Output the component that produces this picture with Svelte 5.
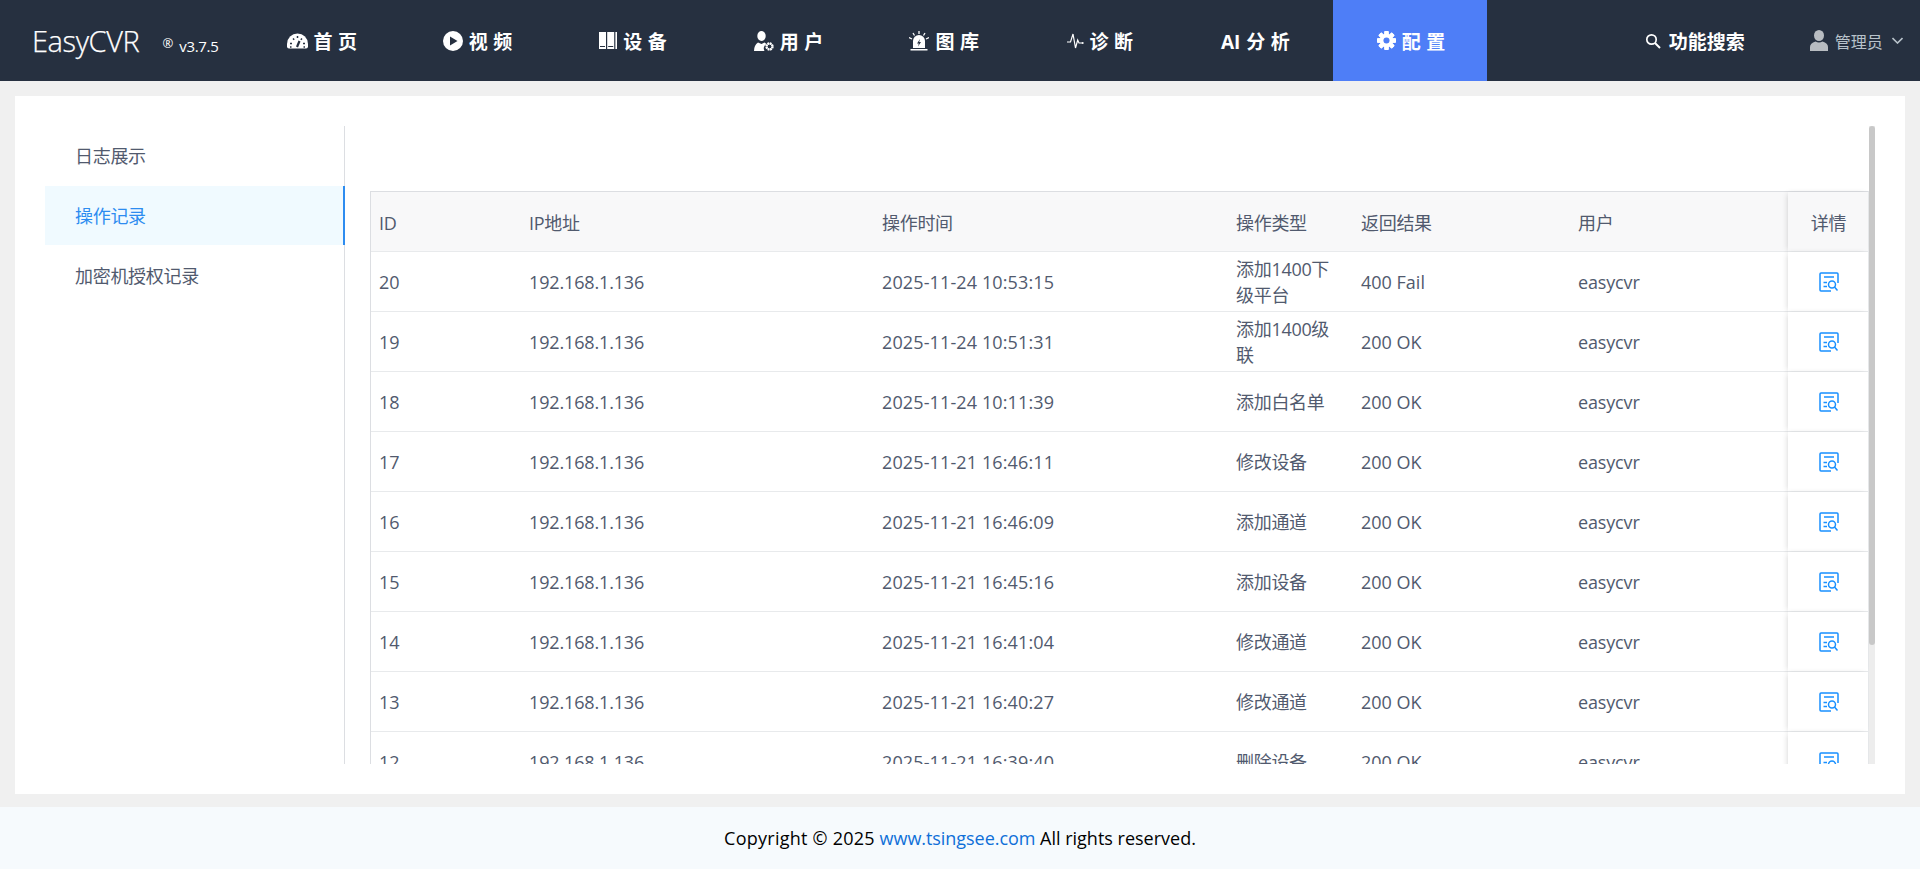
<script>
  const nav = [
    { icon: 'home', label: '首页' },
    { icon: 'play', label: '视频' },
    { icon: 'rack', label: '设备' },
    { icon: 'user', label: '用户' },
    { icon: 'alarm', label: '图库' },
    { icon: 'pulse', label: '诊断' },
    { icon: '', prefix: 'AI', label: '分析' },
    { icon: 'gear', label: '配置', active: true }
  ];
  const menu = [
    { label: '日志展示' },
    { label: '操作记录', active: true },
    { label: '加密机授权记录' }
  ];
  const rows = [
    ['20', '2025-11-24 10:53:15', '添加1400下级平台', '400 Fail'],
    ['19', '2025-11-24 10:51:31', '添加1400级联', '200 OK'],
    ['18', '2025-11-24 10:11:39', '添加白名单', '200 OK'],
    ['17', '2025-11-21 16:46:11', '修改设备', '200 OK'],
    ['16', '2025-11-21 16:46:09', '添加通道', '200 OK'],
    ['15', '2025-11-21 16:45:16', '添加设备', '200 OK'],
    ['14', '2025-11-21 16:41:04', '修改通道', '200 OK'],
    ['13', '2025-11-21 16:40:27', '修改通道', '200 OK'],
    ['12', '2025-11-21 16:39:40', '删除设备', '200 OK']
  ];
  const teeth = [0, 45, 90, 135, 180, 225, 270, 315];
</script>

<div class="page">
  <header class="top">
    <div class="brand">
      <span class="logo">EasyCVR</span>
      <span class="reg">®</span>
      <span class="ver">v3.7.5</span>
    </div>
    <nav class="nav">
      {#each nav as item}
        <div class="item" class:active={item.active}>
          {#if item.icon === 'home'}
            <svg width="21" height="16" viewBox="0 0 21 16">
              <path fill="#fff" d="M2 15.500Q0 15.500 0 13.500V11a10.500 10.500 0 0 1 21 0v2.500Q21 15.500 19 15.500Z" />
              <path stroke="#263040" stroke-width="1.500" fill="none" d="M3 10.500h2M6 5.500l1.200 1.200M10.500 3v2M15 5.500l-1.200 1.200M16 10.500h2M3 14h1.500M16.500 14H18" />
              <path stroke="#263040" stroke-width="2.200" d="M10 14l2.500-6" />
            </svg>
          {:else if item.icon === 'play'}
            <svg width="20" height="20" viewBox="0 0 20 20">
              <circle cx="10" cy="10" r="10" fill="#fff" />
              <path fill="#263040" d="M7 5.500l7.500 4.500-7.500 4.500z" />
            </svg>
          {:else if item.icon === 'rack'}
            <svg width="18" height="17" viewBox="0 0 18 17">
              <path fill="#fff" d="M0 0h7v17H0zM8.200 0h7v17h-7zM16.400 0H18v17h-1.600z" />
              <path fill="#263040" d="M1 14h5v.9H1zM9.200 14h5v.9h-5z" />
            </svg>
          {:else if item.icon === 'user'}
            <svg width="20" height="20" viewBox="0 0 20 20">
              <ellipse cx="7.500" cy="5" rx="4.200" ry="5" fill="#fff" />
              <path fill="#fff" d="M0 20q0-6 4-8.500l3.500 1.500 3-1.500 2 1.500a5 5 0 0 0-2 7z" />
              <circle cx="15.500" cy="15.500" r="3.200" fill="none" stroke="#fff" stroke-width="2" stroke-dasharray="1.800 .7" />
              <circle cx="15.500" cy="15.500" r="2.500" fill="none" stroke="#fff" stroke-width="1" />
            </svg>
          {:else if item.icon === 'alarm'}
            <svg width="20" height="20" viewBox="0 0 20 20">
              <path stroke="#fff" stroke-width="1.300" fill="none" d="M10 0v3M4 2l1.500 2.500M16 2l-1.500 2.500M0 6.500l3 1.500M20 6.500l-3 1.500" />
              <path fill="#fff" d="M4 17V10a6 6 0 0 1 12 0v7z" />
              <path fill="#263040" d="M11 8l-3 4.500h1.800L9 15.500l3-4.500h-1.800z" />
              <path fill="#fff" d="M1.500 18h17v1.500h-17z" />
            </svg>
          {:else if item.icon === 'pulse'}
            <svg width="17" height="16" viewBox="0 0 17 16">
              <path fill="none" stroke="#fff" stroke-width="1.200" d="M0 9h3.500L6 1l2.500 14 2.200-8 1.300 3h3" />
              <circle cx="15.700" cy="10" r="1" fill="#fff" />
            </svg>
          {:else if item.icon === 'gear'}
            <svg width="19" height="19" viewBox="0 0 20 20">
              {#each teeth as t}
                <rect x="7.700" y="0" width="4.600" height="20" rx="1" fill="#fff" transform="rotate({t} 10 10)" />
              {/each}
              <circle cx="10" cy="10" r="7" fill="#fff" />
              <circle cx="10" cy="10" r="3.200" fill="#4e7ef7" />
            </svg>
          {/if}
          <span class="label">{#if item.prefix}<span class="prefix">{item.prefix}</span>{/if}{item.label}</span>
        </div>
      {/each}
    </nav>
    <div class="search">
      <svg width="16" height="16" viewBox="0 0 16 16">
        <circle cx="6.500" cy="6.500" r="4.700" fill="none" stroke="#fff" stroke-width="1.700" />
        <path stroke="#fff" stroke-width="2" d="M10 10l5 5" />
      </svg>
      <span>功能搜索</span>
    </div>
    <div class="account">
      <svg width="18" height="21" viewBox="0 0 18 21">
        <ellipse cx="9" cy="5.500" rx="5" ry="5.500" fill="#b8bcc1" />
        <path fill="#b8bcc1" d="M0 21v-4q0-4 5.500-5.500 3.500 2 7 0Q18 13 18 17v4z" />
      </svg>
      <span class="name">管理员</span>
      <svg width="11" height="7" viewBox="0 0 11 7">
        <path fill="none" stroke="#b8c2ca" stroke-width="1.600" d="M.5 1l5 5 5-5" />
      </svg>
    </div>
  </header>

  <main class="main">
    <section class="card">
      <aside class="side">
        {#each menu as m}
          <div class="side-item" class:on={m.active}>{m.label}</div>
        {/each}
      </aside>
      <div class="scroll">
        <div class="pane">
          <div class="toolbar"></div>
          <table class="grid">
            <colgroup>
              <col class="c-id" /><col class="c-ip" /><col class="c-time" /><col class="c-type" /><col class="c-res" /><col class="c-user" /><col class="c-det" />
            </colgroup>
            <thead>
              <tr>
                <th>ID</th><th>IP地址</th><th>操作时间</th><th>操作类型</th><th>返回结果</th><th>用户</th><th class="det">详情</th>
              </tr>
            </thead>
            <tbody>
              {#each rows as r}
                <tr>
                  <td>{r[0]}</td>
                  <td class="ip">192.168.1.136</td>
                  <td class="when">{r[1]}</td>
                  <td class="type">{r[2]}</td>
                  <td>{r[3]}</td>
                  <td class="ip">easycvr</td>
                  <td class="det">
                    <svg class="doc" width="20" height="20" viewBox="0 0 20 20">
                      <path d="M19 11V2a1 1 0 0 0-1-1H2a1 1 0 0 0-1 1v16a1 1 0 0 0 1 1h10" />
                      <path d="M5 5h10M4.500 10.500h3.500M4.500 14.500h3.500" />
                      <circle cx="13" cy="12.500" r="3.500" />
                      <path d="M15.500 15l3 3.500" />
                    </svg>
                  </td>
                </tr>
              {/each}
            </tbody>
          </table>
        </div>
        <div class="rail"><div class="thumb"></div></div>
      </div>
    </section>
  </main>

  <footer class="foot">
    <span class="copy">Copyright © 2025</span>&nbsp;<a href="#top">www.tsingsee.com</a>&nbsp;All rights reserved.
  </footer>
</div>

<style>
  :global(body) {
    margin: 0;
    background: #f0f0f0;
  }
  .page {
    height: 869px;
    display: flex;
    flex-direction: column;
    overflow: hidden;
    font-family: "Open Sans", "Noto Sans CJK SC", sans-serif;
  }
  .top {
    height: 81px;
    flex: none;
    background: #263040;
    color: #fff;
    display: flex;
    align-items: center;
  }
  .brand {
    width: 244px;
    flex: none;
    padding-left: 32px;
    box-sizing: border-box;
    display: flex;
    align-items: baseline;
  }
  .logo {
    font-size: 29px;
    font-weight: 300;
    letter-spacing: -0.4px;
    -webkit-text-stroke: 0.25px #fff;
  }
  .reg {
    font-size: 13px;
    margin-left: 23px;
    position: relative;
    top: -4px;
  }
  .ver {
    font-size: 15px;
    margin-left: 6px;
    letter-spacing: -0.3px;
  }
  .nav {
    display: flex;
    gap: 2px;
    height: 81px;
  }
  .item {
    width: 153.6px;
    height: 81px;
    box-sizing: border-box;
    padding-left: 2px;
    display: flex;
    align-items: center;
    justify-content: center;
    gap: 6px;
    font-size: 19px;
    font-weight: 700;
    letter-spacing: 5.5px;
  }
  .item .label {
    margin-right: -5.5px;
  }
  .prefix {
    letter-spacing: 0;
    margin-right: 6px;
  }
  .item.active {
    background: #4e7ef7;
  }
  .search {
    margin-left: 158px;
    display: flex;
    align-items: center;
    gap: 8px;
    font-size: 19px;
    font-weight: 700;
  }
  .account {
    margin-left: 65px;
    display: flex;
    align-items: center;
    color: #b8c2ca;
    font-size: 16px;
  }
  .name {
    margin: 0 9px 0 7px;
  }
  .main {
    flex: 1;
    min-height: 0;
    padding: 15px 15px 13px;
  }
  .card {
    height: 698px;
    box-sizing: border-box;
    background: #fff;
    padding: 30px;
    display: flex;
    color: #515a6e;
    font-size: 18px;
  }
  .side {
    width: 300px;
    flex: none;
    box-sizing: border-box;
    border-right: 1px solid #dcdee2;
  }
  .side-item {
    height: 59px;
    line-height: 60px;
    padding-left: 30px;
    margin-right: -1px;
    box-sizing: border-box;
    letter-spacing: -0.3px;
    margin-bottom: 1px;
  }
  .side-item.on {
    background: #f0faff;
    color: #2d8cf0;
    border-right: 2px solid #2d8cf0;
  }
  .scroll {
    flex: 1;
    min-width: 0;
    display: flex;
    overflow: hidden;
  }
  .pane {
    flex: 1;
    min-width: 0;
    padding-left: 25px;
    overflow: hidden;
  }
  .rail {
    width: 6px;
    flex: none;
    background: #ededed;
  }
  .thumb {
    height: 519px;
    background: #c8c8c8;
    border-radius: 3px;
  }
  .toolbar {
    height: 65px;
  }
  .grid {
    width: 100%;
    table-layout: fixed;
    border-collapse: separate;
    border-spacing: 0;
    border-top: 1px solid #dcdee2;
    border-left: 1px solid #dcdee2;
    border-right: 1px solid #e8eaec;
  }
  .c-id { width: 150px; }
  .c-ip { width: 353px; }
  .c-time { width: 354px; }
  .c-type { width: 125px; }
  .c-res { width: 217px; }
  .c-user { width: 218px; }
  th, td {
    height: 60px;
    box-sizing: border-box;
    padding: 0 7px 0 8px;
    text-align: left;
    font-weight: 400;
    border-bottom: 1px solid #e8eaec;
    line-height: 26px;
  }
  th {
    background: #f8f8f9;
    letter-spacing: -0.3px;
    padding-top: 2px;
  }
  .ip {
    letter-spacing: -0.15px;
  }
  .when {
    letter-spacing: 0.12px;
  }
  .type {
    letter-spacing: -0.3px;
    padding-right: 20px;
  }
  .det {
    text-align: center;
    position: relative;
    background: #fff;
    box-shadow: -2px 0 6px -2px rgba(0, 0, 0, 0.18);
  }
  th.det {
    background: #f8f8f9;
  }
  .doc {
    display: block;
    margin: 0 auto;
    fill: none;
    stroke: #1890ff;
    stroke-width: 1.5;
  }
  .foot {
    height: 62px;
    flex: none;
    background: #f6fafd;
    display: flex;
    align-items: center;
    justify-content: center;
    font-size: 18px;
    color: #000;
  }
  .copy {
    letter-spacing: 0.25px;
  }
  .foot a {
    color: #0f6fd8;
    text-decoration: none;
    letter-spacing: -0.05px;
  }
</style>
